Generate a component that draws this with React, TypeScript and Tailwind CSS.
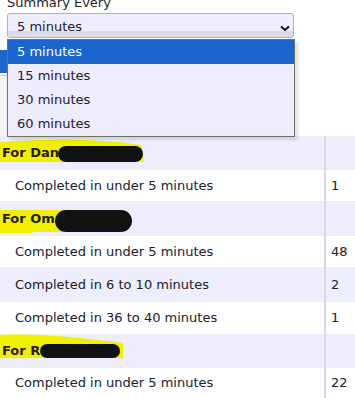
import React from 'react';

type Mark = 'dan' | 'om' | 'r';

type Row =
  | { kind: 'head'; label: string; h: number; mark: Mark }
  | { kind: 'data'; label: string; count: string; h: number; shaded?: boolean };

const rows: Row[] = [
  { kind: 'head', label: 'For Dan', h: 34, mark: 'dan' },
  { kind: 'data', label: 'Completed in under 5 minutes', count: '1', h: 31 },
  { kind: 'head', label: 'For Om', h: 35, mark: 'om' },
  { kind: 'data', label: 'Completed in under 5 minutes', count: '48', h: 31 },
  { kind: 'data', label: 'Completed in 6 to 10 minutes', count: '2', h: 35, shaded: true },
  { kind: 'data', label: 'Completed in 36 to 40 minutes', count: '1', h: 32 },
  { kind: 'head', label: 'For R', h: 34, mark: 'r' },
  { kind: 'data', label: 'Completed in under 5 minutes', count: '22', h: 30 },
];

const options = ['5 minutes', '15 minutes', '30 minutes', '60 minutes'];

// highlighter stroke drawn over the row, behind the name
const highlight: Record<Mark, string> = {
  dan: 'M0 6 C40 3 100 2 141 9 L144 26 L0 26 Z',
  om: 'M0 9 L82 9 L82 30 L64 30 L64 31 L33 31 L33 32 L0 32 Z',
  r: 'M0 1 C40 -1 90 5 123 9 L123 24 L0 24 Z',
};

// redaction blob that follows the first letters of the name
const blob: Record<Mark, string> = {
  dan: '-ml-px mt-[2px] h-[16px] w-[85px]',
  om: 'mt-[5px] h-[22px] w-[77px]',
  r: 'h-[14px] w-[80px]',
};

export default function App() {
  return (
    <div className="relative h-[398px] w-[355px] overflow-hidden bg-white font-['DejaVu_Sans',sans-serif] text-[13px] text-[#20202c]">
      {/* Label */}
      <div className="-mt-[5px] h-[16px] pl-[7px] leading-4 text-[#222]">Summary Every</div>

      {/* Select with its open list */}
      <div className="relative z-20 ml-[7px] mt-[2px] w-[287px]">
        <div className="flex h-[25px] flex-col overflow-hidden rounded-[3px] border border-[#e6a27e] bg-[#efedfb]">
          <div className="flex h-[17px] items-end justify-between pl-[9px] pr-[3px]">
            <span className="translate-y-[5px]">5 minutes</span>
            <svg width="10" height="7" viewBox="0 0 10 7" className="translate-y-[1px]">
              <path d="M1 1.5 L5 5 L9 1.5" fill="none" stroke="#111" strokeWidth="2" />
            </svg>
          </div>
          <div className="flex-1 bg-[#dcdae8]" />
        </div>
        <div className="absolute left-0 top-[26px] w-[288px] border border-[#6c7467] bg-[#eeecfc] shadow-[3px_3px_3px_rgba(0,0,0,0.12)]">
          {options.map((o, i) => (
            <div
              key={o}
              className={
                i === 0
                  ? 'flex h-[24px] items-center bg-[#1a66cc] pl-[9px] text-white'
                  : 'flex h-[24px] items-center pl-[9px] text-[#20202c]'
              }
            >
              {o}
            </div>
          ))}
        </div>
      </div>

      {/* Page content hidden behind the list */}
      <div className="mt-[12px] h-[23px] w-[290px] bg-[#1a66cc]" />
      <div className="mt-[2px] h-[61px] w-[290px] border-t border-[#cfcfcf] bg-[#f4f4f6]" />

      {/* Table */}
      <div className="flex flex-col">
        {rows.map((r, i) => {
          const shaded = r.kind === 'head' || (r.kind === 'data' && r.shaded);
          return (
            <div
              key={i}
              className={shaded ? 'flex bg-[#eeedfc]' : 'flex bg-white'}
              style={{ height: r.h }}
            >
              {r.kind === 'head' ? (
                <div className="relative flex w-[324px] items-center pl-[2px] font-bold text-[#2a1c0c]">
                  <svg className="absolute left-0 top-0" width="150" height={r.h}>
                    <path d={highlight[r.mark]} fill="#f0f000" />
                  </svg>
                  <span className="relative">{r.label}</span>
                  <span className={`relative rounded-full bg-[#111] ${blob[r.mark]}`} />
                </div>
              ) : (
                <div className="flex w-[324px] items-center pl-[15px]">{r.label}</div>
              )}
              <div className="flex flex-1 items-center border-l-2 border-[#d8d6e8] pl-[5px]">
                {r.kind === 'data' ? r.count : ''}
              </div>
            </div>
          );
        })}
      </div>
    </div>
  );
}
